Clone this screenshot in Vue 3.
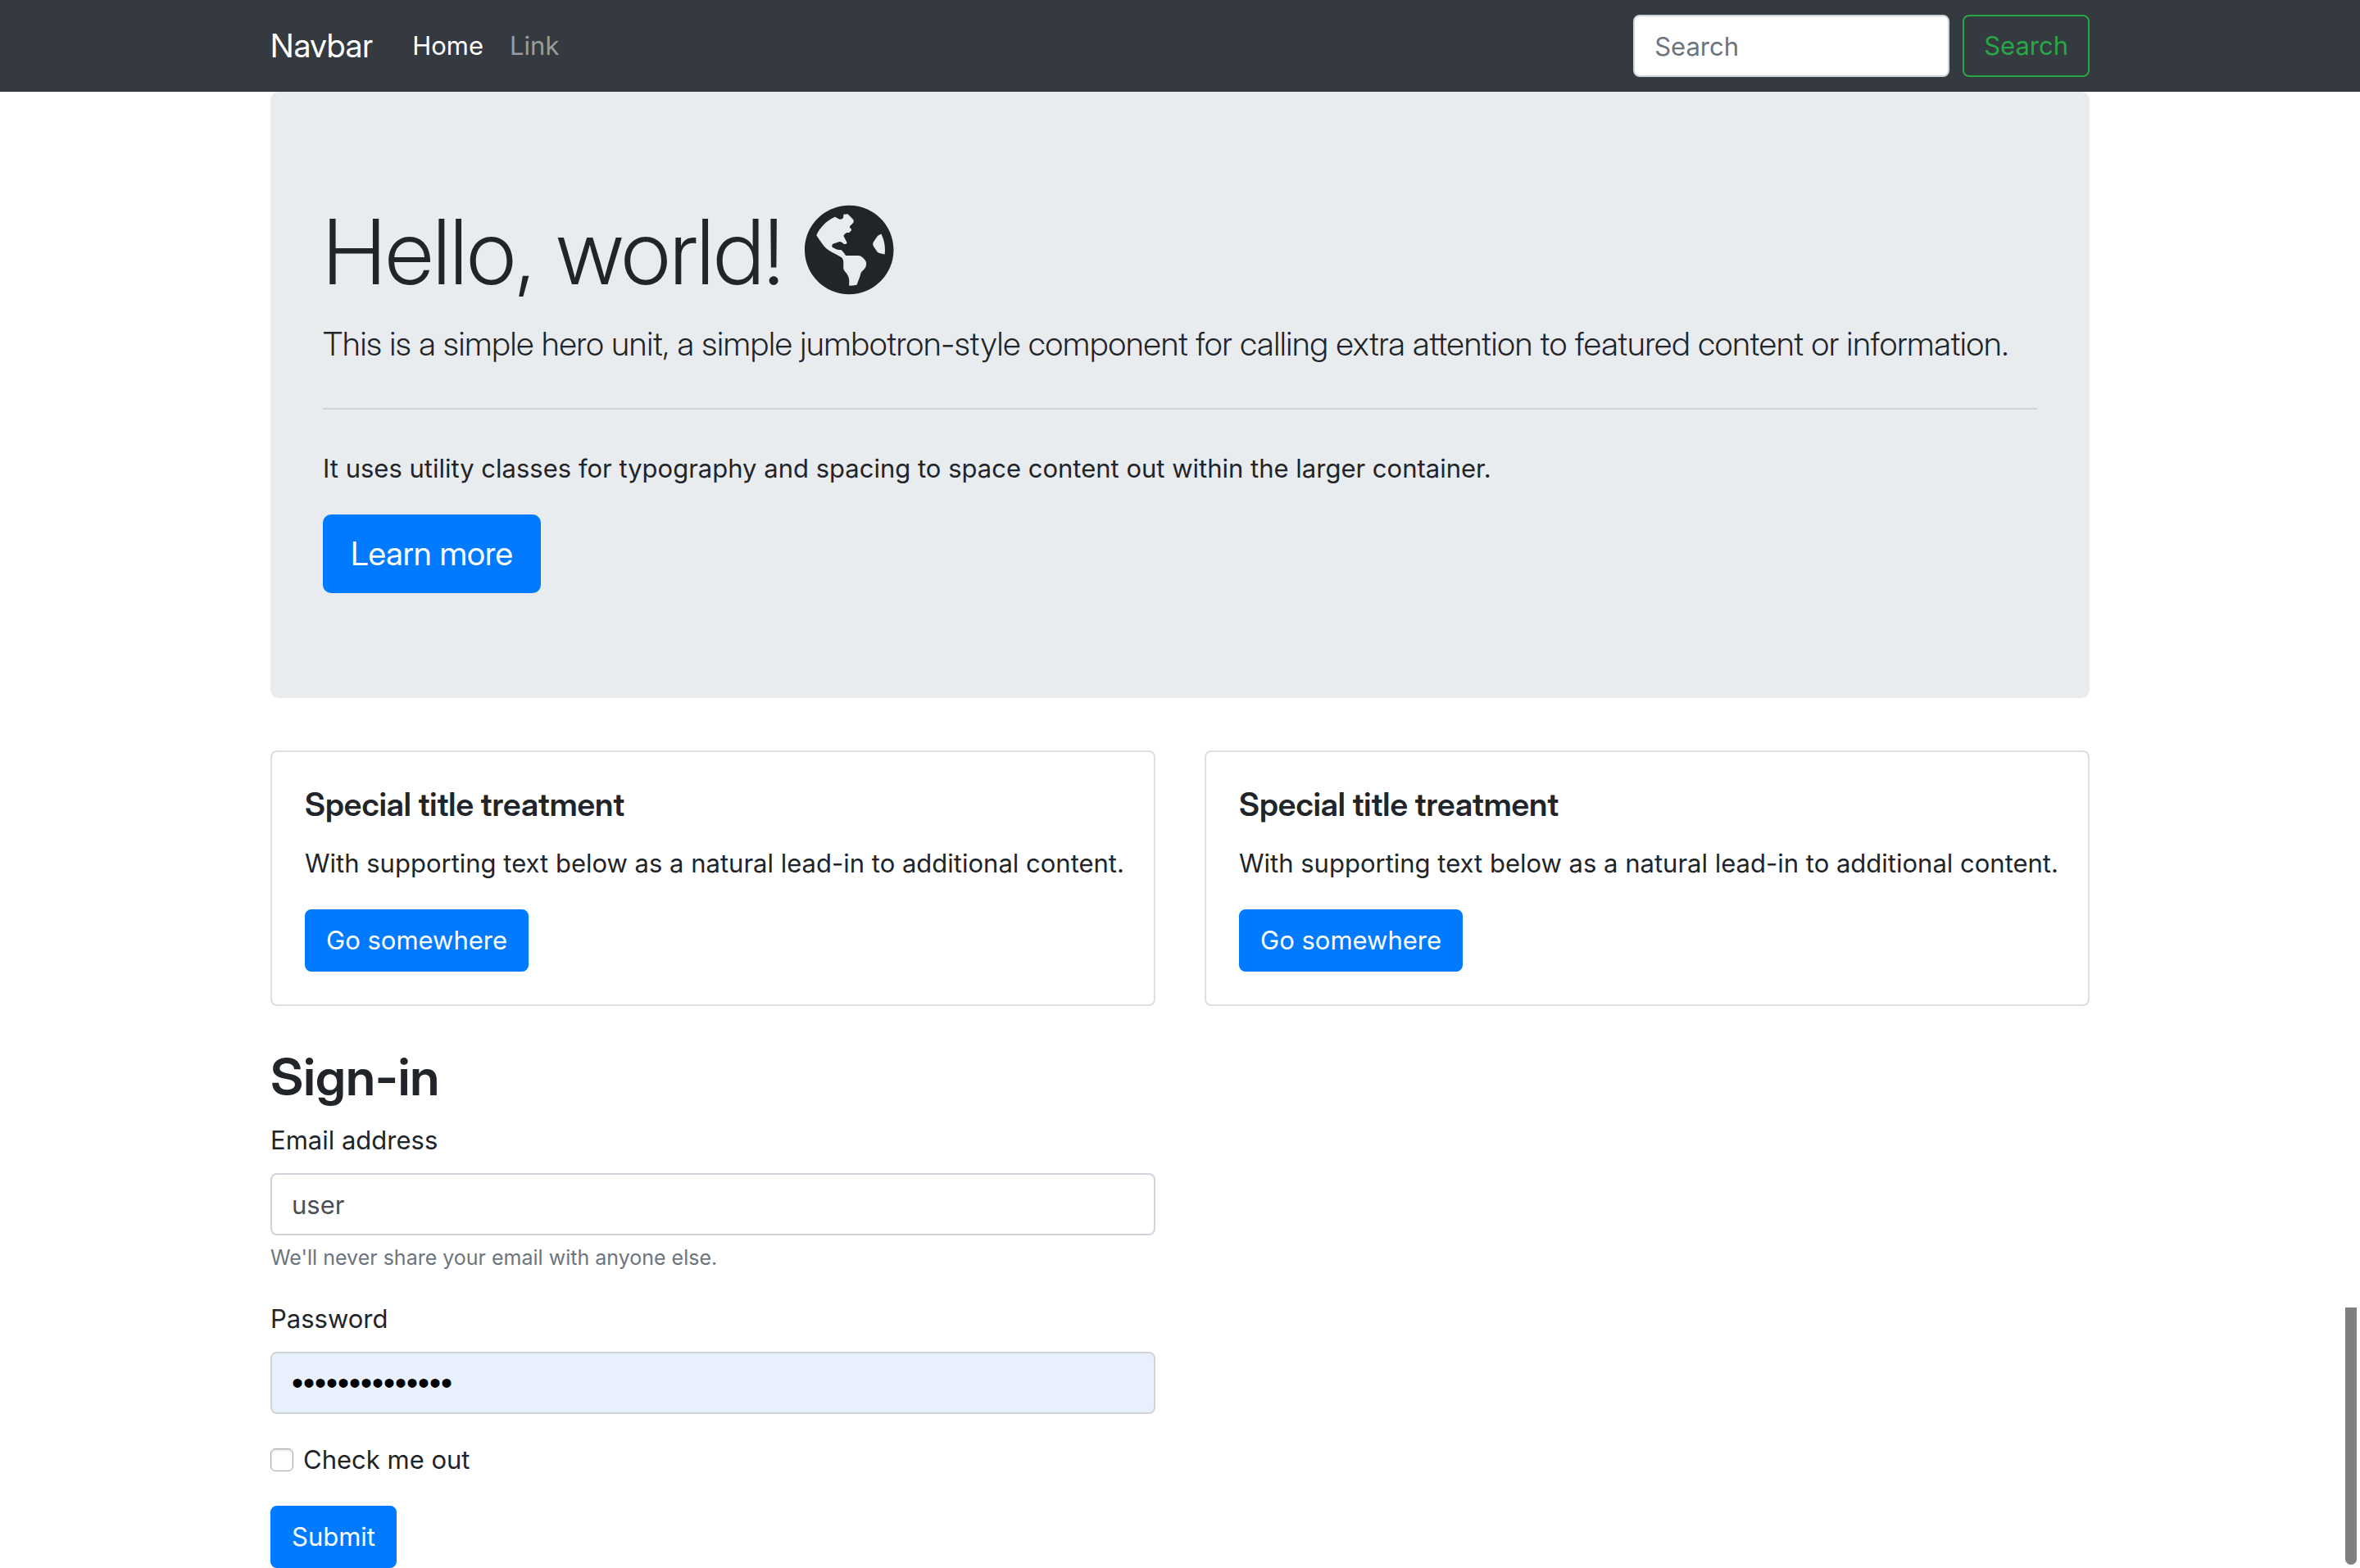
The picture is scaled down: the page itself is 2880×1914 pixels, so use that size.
<script setup>
import { ref } from 'vue'

const query = ref('')
const email = ref('user')
const password = ref('correct-horses')
const remember = ref(false)

const cards = [
  {
    id: 1,
    title: 'Special title treatment',
    text: 'With supporting text below as a natural lead-in to additional content.',
    action: 'Go somewhere',
  },
  {
    id: 2,
    title: 'Special title treatment',
    text: 'With supporting text below as a natural lead-in to additional content.',
    action: 'Go somewhere',
  },
]
</script>

<template>
  <div class="page">
    <header class="navbar">
      <div class="container navbar-inner">
        <a class="brand" href="#">Navbar</a>
        <nav class="nav">
          <a class="nav-link active" href="#">Home</a>
          <a class="nav-link" href="#">Link</a>
        </nav>
        <form class="search" role="search" @submit.prevent>
          <input v-model="query" class="control search-input" type="search" placeholder="Search" aria-label="Search">
          <button class="btn btn-outline" type="submit">Search</button>
        </form>
      </div>
    </header>

    <main class="container">
      <section class="jumbotron">
        <h1 class="display">
          Hello, world!
          <svg class="globe" viewBox="0 0 496 512" aria-hidden="true">
            <path fill="currentColor" d="M248 8C111.03 8 0 119.03 0 256s111.03 248 248 248 248-111.03 248-248S384.97 8 248 8zm82.29 357.6c-3.9 3.88-7.99 7.95-11.31 11.28-2.99 3-5.1 6.7-6.17 10.71-1.51 5.66-2.73 11.38-4.77 16.87l-17.39 46.85c-13.76 3-28 4.69-42.65 4.69v-27.38c1.69-12.62-7.64-36.26-22.63-51.25-6-6-9.37-14.14-9.37-22.63v-32.01c0-11.64-6.27-22.34-16.46-27.97-14.37-7.95-34.81-19.06-48.81-26.11-11.48-5.78-22.1-13.14-31.65-21.75l-.8-.72a114.792 114.792 0 0 1-18.06-20.74c-9.38-13.77-24.66-36.42-34.59-51.14 20.47-45.5 57.36-82.04 103.2-101.89l24.01 12.01C203.48 89.74 216 82.01 216 70.11v-11.3c7.99-1.29 16.12-2.11 24.39-2.42l28.3 28.3c6.25 6.25 6.25 16.38 0 22.63L264 112l-10.34 10.34c-3.12 3.12-3.12 8.19 0 11.31l4.69 4.69c3.12 3.12 3.12 8.19 0 11.31l-8 8a8.008 8.008 0 0 1-5.66 2.34h-8.99c-2.08 0-4.08.81-5.58 2.27l-9.92 9.65a8.008 8.008 0 0 0-1.58 9.31l15.59 31.19c2.66 5.32-1.21 11.58-7.15 11.58h-5.64c-1.93 0-3.79-.7-5.24-1.96l-9.28-8.06a16.017 16.017 0 0 0-15.55-3.1l-31.17 10.39a11.95 11.95 0 0 0-8.17 11.34c0 4.53 2.56 8.66 6.61 10.69l11.08 5.54c9.41 4.71 19.79 7.16 30.31 7.16s22.59 27.29 32 32h66.75c8.49 0 16.62 3.37 22.63 9.37l13.69 13.69a30.503 30.503 0 0 1 8.93 21.57 46.536 46.536 0 0 1-13.72 32.98zM417 274.25c-5.79-1.45-10.84-5-14.15-9.97l-17.98-26.97a23.97 23.97 0 0 1 0-26.62l19.59-29.38c2.32-3.47 5.5-6.29 9.24-8.15l12.98-6.49C440.2 193.59 448 223.87 448 256c0 8.67-.74 17.16-1.82 25.54L417 274.25z" />
          </svg>
        </h1>
        <p class="lead">This is a simple hero unit, a simple jumbotron-style component for calling extra attention to featured content or information.</p>
        <hr class="rule">
        <p class="text">It uses utility classes for typography and spacing to space content out within the larger container.</p>
        <a class="btn btn-primary btn-large" href="#">Learn more</a>
      </section>

      <section class="columns">
        <article v-for="card in cards" :key="card.id" class="card">
          <h5 class="card-title">{{ card.title }}</h5>
          <p class="text">{{ card.text }}</p>
          <a class="btn btn-primary" href="#">{{ card.action }}</a>
        </article>
      </section>

      <div class="columns">
        <form class="sign-in" @submit.prevent>
          <h2 class="heading">Sign-in</h2>
          <div class="field">
            <label class="label" for="email">Email address</label>
            <input id="email" v-model="email" class="control" type="text" aria-describedby="email-help">
            <small id="email-help" class="help">We'll never share your email with anyone else.</small>
          </div>
          <div class="field">
            <label class="label" for="password">Password</label>
            <input id="password" v-model="password" class="control autofilled" type="password">
          </div>
          <div class="check">
            <input id="remember" v-model="remember" class="checkbox" type="checkbox">
            <label for="remember">Check me out</label>
          </div>
          <button class="btn btn-primary" type="submit">Submit</button>
        </form>
      </div>
    </main>

    <div class="scroll-thumb" aria-hidden="true"></div>
  </div>
</template>

<style>
html {
  scrollbar-width: none;
}

body {
  margin: 0;
  background: #fff;
}
</style>

<style scoped>
.page {
  color: #212529;
  font-family: Inter, "Liberation Sans", sans-serif;
  font-size: 31px;
  line-height: 48px;
}

.page *,
.page *::before {
  box-sizing: border-box;
}

.brand,
.display,
.lead,
.btn-large,
.card-title,
.heading {
  font-family: "Inter Display", Inter, "Liberation Sans", sans-serif;
}

.container {
  max-width: 2280px;
  margin: 0 auto;
  padding: 0 30px;
}

.navbar {
  padding: 16px 0;
  background: #343a40;
}

.navbar-inner {
  display: flex;
  align-items: center;
}

.brand {
  margin-right: 32px;
  color: #fff;
  font-size: 40px;
  line-height: 60px;
  text-decoration: none;
}

.nav {
  display: flex;
}

.nav-link {
  padding: 16px;
  color: rgba(255, 255, 255, 0.5);
  text-decoration: none;
}

.nav-link.active {
  color: #fff;
}

.search {
  display: flex;
  gap: 16px;
  margin-left: auto;
}

.control {
  display: block;
  width: 100%;
  height: 76px;
  margin: 0;
  padding: 12px 24px;
  border: 2px solid #ced4da;
  border-radius: 8px;
  background: #fff;
  color: #495057;
  font: inherit;
  appearance: none;
}

.control::placeholder {
  color: #6c757d;
  opacity: 1;
}

.search-input {
  width: 386px;
}

.autofilled {
  background: #e8f0fe;
  color: #000;
  font-family: "Liberation Sans", sans-serif;
  font-size: 40px;
}

.btn {
  display: inline-block;
  padding: 12px 24px;
  border: 2px solid transparent;
  border-radius: 8px;
  font-size: inherit;
  line-height: inherit;
  text-align: center;
  text-decoration: none;
  vertical-align: top;
  cursor: pointer;
}

button.btn {
  font-family: inherit;
}

.btn-primary {
  border-color: #007bff;
  background: #007bff;
  color: #fff;
}

.btn-outline {
  border-color: #28a745;
  background: transparent;
  color: #28a745;
}

.btn-large {
  padding: 16px 32px;
  border-radius: 10px;
  font-size: 40px;
  line-height: 60px;
}

.jumbotron {
  margin-bottom: 64px;
  padding: 128px 64px;
  border-radius: 10px;
  background: #e9ecef;
}

.display {
  margin: 0 0 16px;
  font-size: 110px;
  font-weight: 300;
  line-height: 134px;
}

.globe {
  height: 112px;
  vertical-align: -14px;
}

.lead {
  margin: 0;
  font-size: 40px;
  font-weight: 300;
  line-height: 60px;
}

.rule {
  margin: 48px 0;
  border: 0;
  border-top: 2px solid rgba(0, 0, 0, 0.1);
}

.text {
  margin: 0 0 32px;
}

.columns {
  display: grid;
  grid-template-columns: repeat(2, minmax(0, 1fr));
  gap: 60px;
}

.card {
  padding: 40px;
  border: 2px solid #dfdfdf;
  border-radius: 8px;
}

.card .text {
  white-space: nowrap;
}

.card-title {
  margin: 0 0 24px;
  font-size: 39px;
  font-weight: 600;
  line-height: 48px;
}

.sign-in {
  padding-top: 48px;
}

.heading {
  margin: 0 0 16px;
  font-size: 63px;
  font-weight: 600;
  line-height: 76px;
}

.field {
  margin-bottom: 32px;
}

.label {
  display: block;
  margin-bottom: 16px;
}

.help {
  display: block;
  margin-top: 8px;
  color: #6c757d;
  font-size: 25px;
  line-height: 38px;
}

.check {
  display: flex;
  align-items: center;
  gap: 12px;
  margin-bottom: 32px;
}

.checkbox {
  width: 28px;
  height: 28px;
  margin: 0;
  border: 1px solid #a9a9a9;
  border-radius: 6px;
  background: #fff;
  box-shadow: inset 0 1px 3px rgba(0, 0, 0, 0.2);
  appearance: none;
}

.checkbox:checked {
  border-color: #007bff;
  background: #007bff;
}

.scroll-thumb {
  position: fixed;
  right: 4px;
  bottom: 4px;
  width: 14px;
  height: 314px;
  border-radius: 0 0 7px 7px;
  background: #7f7f7f;
}
</style>
